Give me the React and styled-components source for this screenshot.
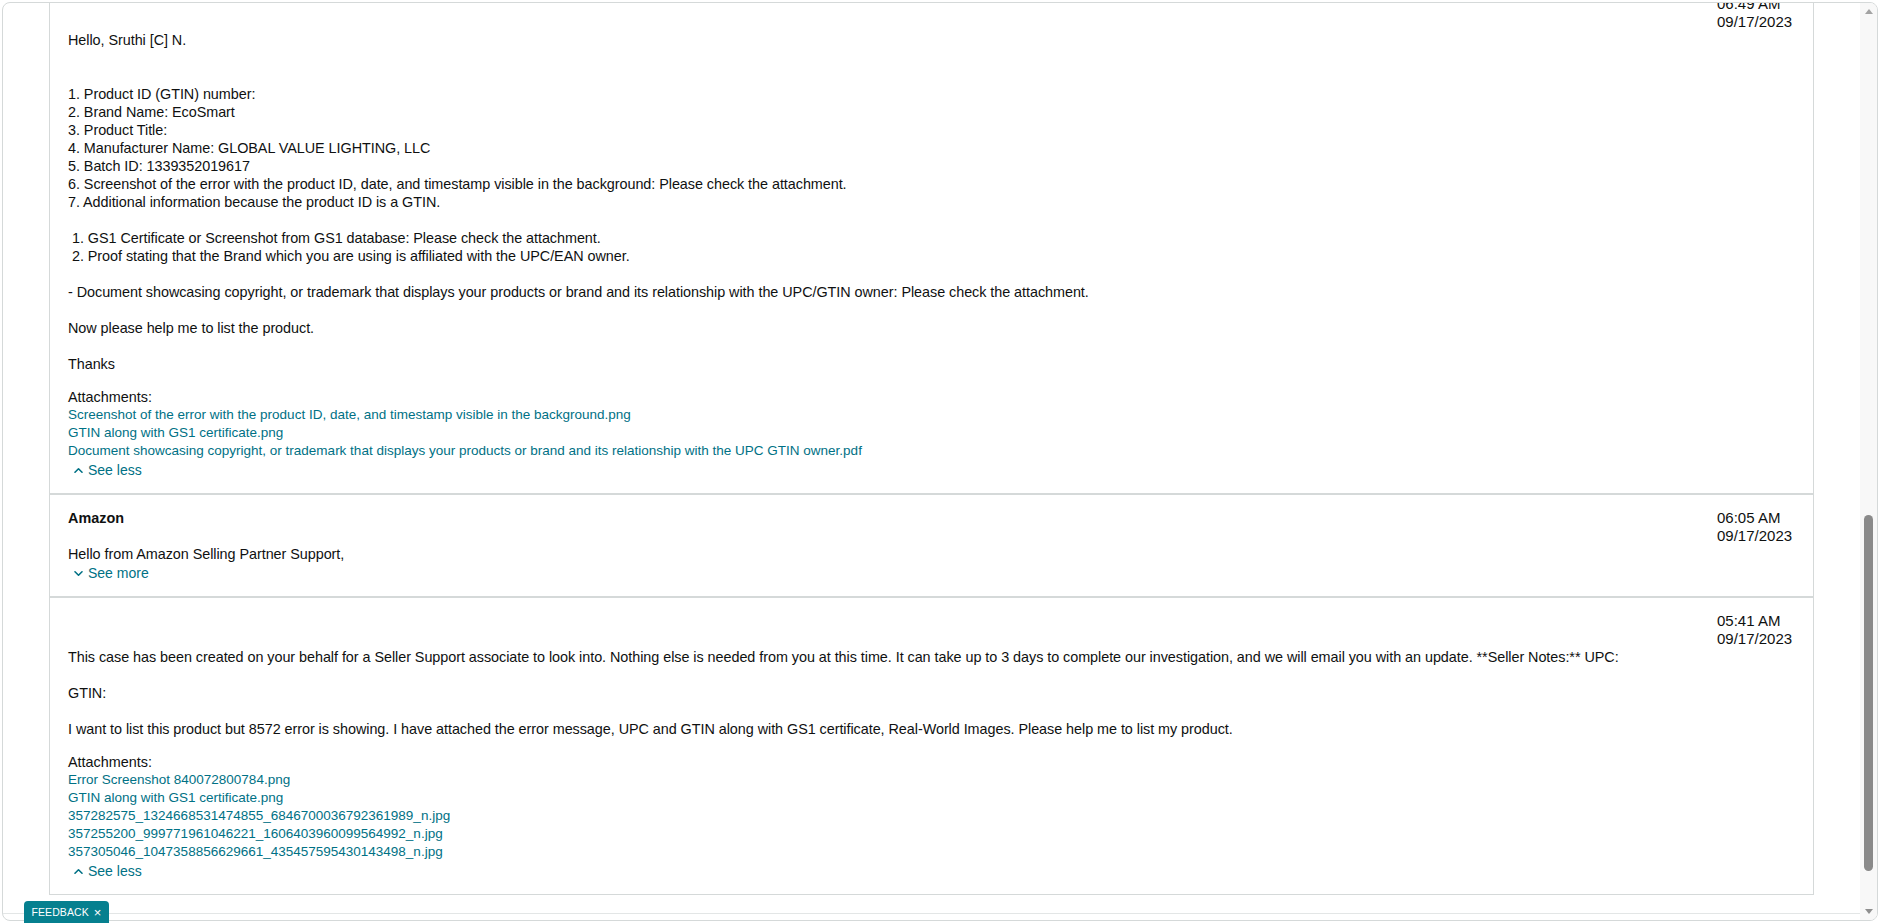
import React from 'react'
import styled, { createGlobalStyle } from 'styled-components'

const GlobalStyle = createGlobalStyle`
  html, body {
    margin: 0;
    padding: 0;
    background: #fff;
  }
  body {
    font-family: 'Liberation Sans', Arial, sans-serif;
    color: #0f1111;
    overflow: hidden;
  }
`

const Frame = styled.div`
  box-sizing: border-box;
  margin: 2px 0 2px 2px;
  height: calc(100vh - 4px);
  border: 1px solid #d5d9d9;
  border-radius: 8px;
  display: grid;
  grid-template-columns: 1fr 17px;
  overflow: hidden;
`
const Column = styled.div`
  display: flex;
  flex-direction: column;
  min-height: 0;
`
const Viewport = styled.div`
  flex: 1;
  min-height: 0;
  overflow: hidden;
  display: flex;
  flex-direction: column;
  justify-content: flex-end;
  padding: 0 46px 18px 46px;
  border-bottom: 1px solid #e3e6e6;
`
const FooterGap = styled.div`
  height: 6px;
`
const Rail = styled.div`
  background: #f8f8f8;
  display: flex;
  flex-direction: column;
  align-items: center;
`
const RailButton = styled.div`
  height: 17px;
  width: 100%;
  display: flex;
  align-items: center;
  justify-content: center;
  &::after {
    content: '';
    width: 0;
    height: 0;
    border-left: 4px solid transparent;
    border-right: 4px solid transparent;
    ${p => p.$down
      ? 'border-top: 5px solid #8f8f8f;'
      : 'border-bottom: 5px solid #a3a3a3;'}
  }
`
const Thumb = styled.div`
  margin-top: 495px;
  width: 9px;
  height: 356px;
  border-radius: 5px;
  background: #8a8a8a;
`
const RailFill = styled.div`
  flex: 1;
`

const Thread = styled.div`
  flex-shrink: 0;
  border: 1px solid #d5d9d9;
  background: #fff;
`
const Message = styled.div`
  padding: 14px 19px 14px 18px;
  & + & {
    border-top: 2px solid #d5d9d9;
  }
`
const Header = styled.div`
  display: flex;
  justify-content: space-between;
  align-items: flex-start;
`
const Sender = styled.div`
  font-size: 14.4px;
  line-height: 18px;
  font-weight: 700;
`
const Stamp = styled.div`
  width: 77px;
  font-size: 15px;
  line-height: 18px;
  white-space: nowrap;
  color: #0f1111;
`
const Body = styled.div`
  font-size: 14.4px;
  line-height: 18px;
  white-space: pre-wrap;
  letter-spacing: -0.05px;
`
const Attachments = styled.div`
  margin-top: 15px;
  font-size: 14.4px;
  line-height: 18px;
`
const FileLink = styled.a`
  display: block;
  font-size: 13.5px;
  color: #007185;
  text-decoration: none;
`
const Toggle = styled.a`
  display: flex;
  align-items: center;
  gap: 5px;
  height: 18px;
  margin-top: 1px;
  padding-left: 6px;
  font-size: 14px;
  color: #007185;
  text-decoration: none;
  cursor: pointer;
`
const FeedbackTab = styled.button`
  position: fixed;
  left: 24px;
  bottom: 0;
  width: 85px;
  height: 22px;
  border: none;
  border-radius: 4px 4px 0 0;
  background: #06808f;
  color: #fff;
  font-family: 'Liberation Sans', Arial, sans-serif;
  font-size: 10.5px;
  letter-spacing: 0.1px;
  display: flex;
  align-items: center;
  justify-content: center;
  gap: 5px;
  padding: 0;
  span {
    font-size: 13px;
    line-height: 1;
  }
`

function Chevron({ up }) {
  return (
    <svg width="9" height="9" viewBox="0 0 9 9" fill="none">
      <polyline
        points={up ? '1,6.2 4.5,2.8 8,6.2' : '1,2.8 4.5,6.2 8,2.8'}
        stroke="#007185"
        strokeWidth="1.6"
        strokeLinecap="round"
        strokeLinejoin="round"
      />
    </svg>
  )
}

const messages = [
  {
    id: 1,
    time: '06:49 AM',
    date: '09/17/2023',
    body: `Hello, Sruthi [C] N.


1. Product ID (GTIN) number:
2. Brand Name: EcoSmart
3. Product Title:
4. Manufacturer Name: GLOBAL VALUE LIGHTING, LLC
5. Batch ID: 1339352019617
6. Screenshot of the error with the product ID, date, and timestamp visible in the background: Please check the attachment.
7. Additional information because the product ID is a GTIN.

 1. GS1 Certificate or Screenshot from GS1 database: Please check the attachment.
 2. Proof stating that the Brand which you are using is affiliated with the UPC/EAN owner.

- Document showcasing copyright, or trademark that displays your products or brand and its relationship with the UPC/GTIN owner: Please check the attachment.

Now please help me to list the product.

Thanks`,
    files: [
      'Screenshot of the error with the product ID, date, and timestamp visible in the background.png',
      'GTIN along with GS1 certificate.png',
      'Document showcasing copyright, or trademark that displays your products or brand and its relationship with the UPC GTIN owner.pdf'
    ],
    expanded: true
  },
  {
    id: 2,
    sender: 'Amazon',
    time: '06:05 AM',
    date: '09/17/2023',
    body: 'Hello from Amazon Selling Partner Support,',
    expanded: false
  },
  {
    id: 3,
    time: '05:41 AM',
    date: '09/17/2023',
    body: `This case has been created on your behalf for a Seller Support associate to look into. Nothing else is needed from you at this time. It can take up to 3 days to complete our investigation, and we will email you with an update. **Seller Notes:** UPC:

GTIN:

I want to list this product but 8572 error is showing. I have attached the error message, UPC and GTIN along with GS1 certificate, Real-World Images. Please help me to list my product.`,
    files: [
      'Error Screenshot 840072800784.png',
      'GTIN along with GS1 certificate.png',
      '357282575_1324668531474855_6846700036792361989_n.jpg',
      '357255200_999771961046221_1606403960099564992_n.jpg',
      '357305046_1047358856629661_435457595430143498_n.jpg'
    ],
    expanded: true
  }
]

function CaseMessage({ msg }) {
  return (
    <Message>
      <Header>
        <Sender>{msg.sender || ''}</Sender>
        <Stamp>
          {msg.time}
          <br />
          {msg.date}
        </Stamp>
      </Header>
      <Body>{msg.body}</Body>
      {msg.files && (
        <Attachments>
          Attachments:
          {msg.files.map(f => (
            <FileLink key={f} href="#">{f}</FileLink>
          ))}
        </Attachments>
      )}
      <Toggle>
        <Chevron up={msg.expanded} />
        {msg.expanded ? 'See less' : 'See more'}
      </Toggle>
    </Message>
  )
}

export default function App() {
  return (
    <>
      <GlobalStyle />
      <Frame>
        <Column>
          <Viewport>
            <Thread>
              {messages.map(m => (
                <CaseMessage key={m.id} msg={m} />
              ))}
            </Thread>
          </Viewport>
          <FooterGap />
        </Column>
        <Rail>
          <RailButton />
          <Thumb />
          <RailFill />
          <RailButton $down />
        </Rail>
      </Frame>
      <FeedbackTab>
        FEEDBACK <span>×</span>
      </FeedbackTab>
    </>
  )
}
